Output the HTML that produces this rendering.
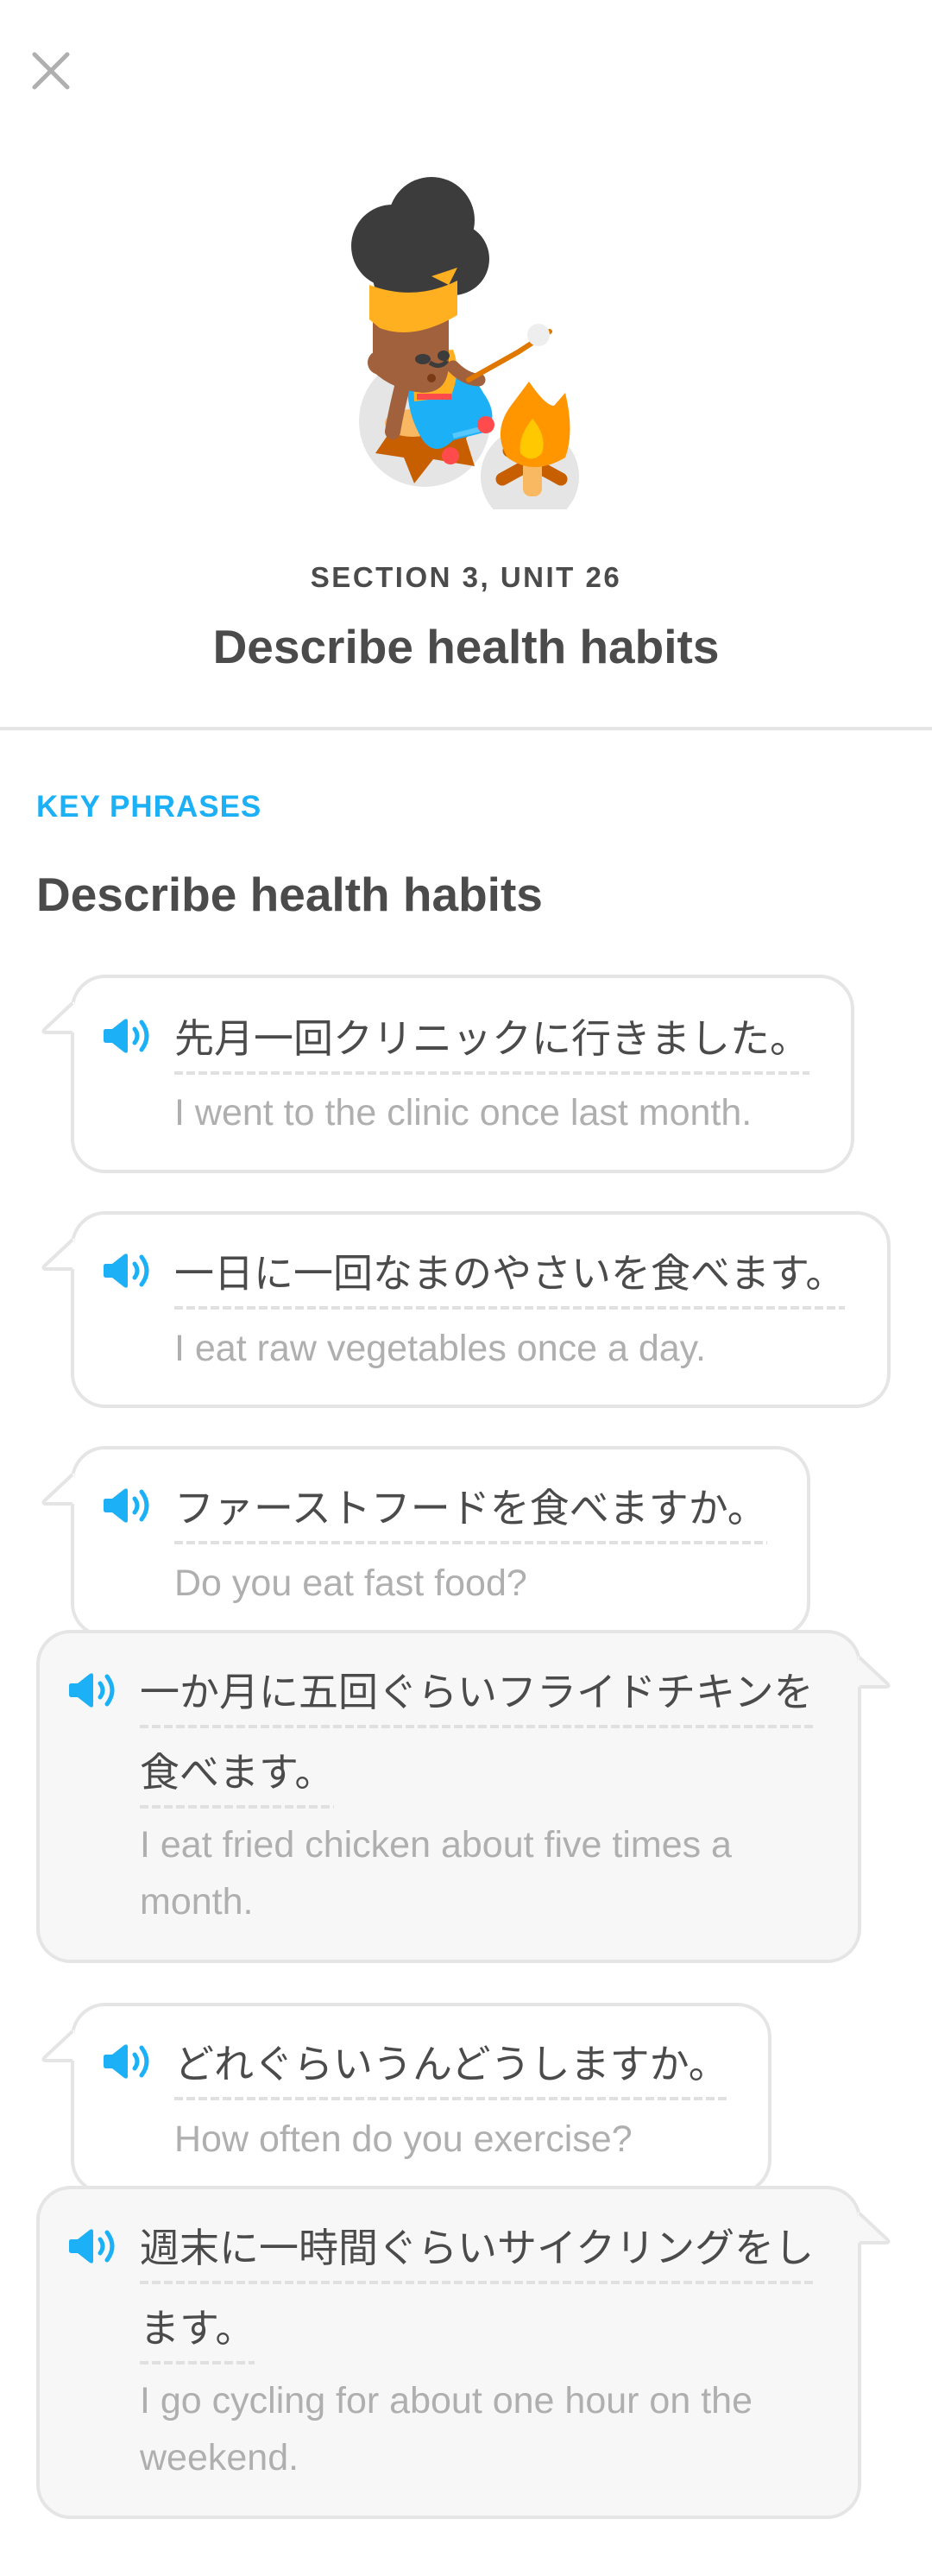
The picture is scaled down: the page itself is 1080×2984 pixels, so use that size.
<!DOCTYPE html>
<html><head><meta charset="utf-8">
<style>
*{margin:0;padding:0;box-sizing:border-box}
body{width:1080px;height:2984px;background:#fff;position:relative;overflow:hidden;font-family:"Liberation Sans","Noto Sans CJK JP",sans-serif;color:#4b4b4b}
.a{position:absolute}
.bub{position:absolute;border:4px solid #e5e5e5;border-radius:40px;background:#fff}
.bub.g{background:#f7f7f7}
.jp{position:absolute;font-size:46px;line-height:54px;white-space:nowrap;padding-bottom:15px;color:#4b4b4b;
 background:repeating-linear-gradient(90deg,#e0e0e0 0 10px,transparent 10px 14px) left bottom/100% 4px no-repeat}
.en{position:absolute;font-size:43px;line-height:50px;color:#afafaf;white-space:nowrap}
.spk{position:absolute;width:64px;height:44px}
.tail{position:absolute;width:44px;height:48px}
</style></head><body>

<svg class="a" style="left:36px;top:59px" width="46" height="46" viewBox="0 0 46 46"><path d="M4 4L42 42M42 4L4 42" stroke="#afafaf" stroke-width="5" stroke-linecap="round"/></svg>

<svg class="a" style="left:380px;top:190px" width="320" height="400" viewBox="380 190 320 400">
 <circle cx="492" cy="488" r="76" fill="#e5e5e5"/>
 <circle cx="614" cy="552" r="57" fill="#e5e5e5"/>
 <!-- stump -->
 <path d="M452 500 L435 525 L468 530 L480 560 L502 532 L550 540 L540 508 L552 488 L470 488 Z" fill="#c75f00"/>
 <ellipse cx="478" cy="490" rx="32" ry="16" fill="#f9b862"/>
 <!-- pants -->
 <path d="M475 420 Q465 470 490 510 Q505 530 525 510 L565 500 Q578 480 560 455 Q540 420 505 418 Z" fill="#1cb0f6"/>
 <path d="M525 505 L565 495" stroke="#56c8ff" stroke-width="6"/>
 <circle cx="563" cy="492" r="10" fill="#ff4b4b"/>
 <circle cx="522" cy="528" r="10" fill="#ff4b4b"/>
 <!-- torso -->
 <path d="M478 450 L525 445 Q535 470 522 500 L480 505 Z" fill="#ffb020" transform="translate(0,-40)"/>
 <rect x="483" y="456" width="40" height="7" fill="#ff4b4b"/>
 <path d="M472 425 Q460 470 455 500" stroke="#a0613c" stroke-width="18" stroke-linecap="round" fill="none"/>
 <path d="M525 425 Q540 440 555 440" stroke="#a0613c" stroke-width="15" stroke-linecap="round" fill="none"/>
 <!-- stick & marshmallow -->
 <path d="M543 440 L600 408 L637 384" stroke="#e07800" stroke-width="6" fill="none" stroke-linecap="round"/>
 <circle cx="624" cy="388" r="13" fill="#eee"/>
 <!-- head -->
 <path d="M432 350 L520 350 L520 420 Q520 455 490 455 Q455 452 432 430 Z" fill="#a0613c"/>
 <circle cx="440" cy="420" r="14" fill="#a0613c"/>
 <path d="M498 420 Q510 428 518 418" stroke="#3c3c3c" stroke-width="5" fill="none"/>
 <ellipse cx="490" cy="416" rx="9" ry="6" fill="#3c3c3c"/><ellipse cx="514" cy="412" rx="7" ry="6" fill="#3c3c3c"/>
 <circle cx="500" cy="438" r="5" fill="#7a3a18"/>
 <!-- hair -->
 <circle cx="455" cy="285" r="48" fill="#3c3c3c"/>
 <circle cx="500" cy="255" r="50" fill="#3c3c3c"/>
 <circle cx="525" cy="300" r="42" fill="#3c3c3c"/>
 <circle cx="470" cy="320" r="38" fill="#3c3c3c"/>
 <!-- headband -->
 <path d="M428 330 Q480 350 530 325 L530 365 Q480 395 440 380 L428 370 Z" fill="#ffb020"/>
 <path d="M500 320 L520 330 L530 310 Z" fill="#ffb020"/>
 <!-- fire logs -->
 <path d="M582 555 L642 522 M650 555 L590 522" stroke="#c75f00" stroke-width="15" stroke-linecap="round"/>
 <rect x="606" y="525" width="22" height="50" rx="9" fill="#f9b862"/>
 <!-- flame -->
 <path d="M613 442 Q632 470 642 470 L655 455 Q666 500 655 530 Q618 552 588 530 Q570 500 592 470 Z" fill="#ff9600"/>
 <path d="M617 485 Q634 505 628 525 Q615 538 603 525 Q600 506 617 485 Z" fill="#ffc800"/>
</svg>

<div class="a" style="left:0;width:1080px;top:648px;text-align:center;font-size:33px;font-weight:bold;letter-spacing:2.5px;line-height:42px;color:#4b4b4b">SECTION 3, UNIT 26</div>
<div class="a" style="left:0;width:1080px;top:716px;text-align:center;font-size:55px;font-weight:bold;line-height:66px;color:#4b4b4b">Describe health habits</div>
<div class="a" style="left:0;top:842px;width:1080px;height:4px;background:#e5e5e5"></div>

<div class="a" style="left:42px;top:914px;font-size:35px;font-weight:bold;color:#1cb0f6;line-height:42px;letter-spacing:1px">KEY PHRASES</div>
<div class="a" style="left:42px;top:1004px;font-size:55px;font-weight:bold;color:#4b4b4b;line-height:64px">Describe health habits</div>

<!-- Bubble 1 -->
<div class="bub" style="left:82px;top:1129px;width:908px;height:230px"></div>
<svg class="tail" style="left:44px;top:1158px" viewBox="0 0 44 48"><path d="M42 2 L6 36 L42 38 Z" fill="#fff"/><path d="M40 4 L8 34 Q4 38 10 38 L40 38" stroke="#e5e5e5" stroke-width="4" fill="none" stroke-linejoin="round"/></svg>
<svg class="spk" style="left:118px;top:1178px" viewBox="0 0 64 44"><path d="M4 14 Q2 14 2 17 L2 27 Q2 30 5 30 L12 30 L26 41 Q30 43 30 39 L30 5 Q30 1 26 3 L12 14 Z" fill="#1cb0f6"/><path d="M38 14 Q44 22 38 30 M46 6 Q58 22 46 38" stroke="#1cb0f6" stroke-width="5" fill="none" stroke-linecap="round"/></svg>
<div class="jp" style="left:202px;top:1176px">先月一回クリニックに行きました。</div>
<div class="en" style="left:202px;top:1264px">I went to the clinic once last month.</div>

<!-- Bubble 2 -->
<div class="bub" style="left:82px;top:1403px;width:950px;height:228px"></div>
<svg class="tail" style="left:44px;top:1432px" viewBox="0 0 44 48"><path d="M42 2 L6 36 L42 38 Z" fill="#fff"/><path d="M40 4 L8 34 Q4 38 10 38 L40 38" stroke="#e5e5e5" stroke-width="4" fill="none" stroke-linejoin="round"/></svg>
<svg class="spk" style="left:118px;top:1450px" viewBox="0 0 64 44"><path d="M4 14 Q2 14 2 17 L2 27 Q2 30 5 30 L12 30 L26 41 Q30 43 30 39 L30 5 Q30 1 26 3 L12 14 Z" fill="#1cb0f6"/><path d="M38 14 Q44 22 38 30 M46 6 Q58 22 46 38" stroke="#1cb0f6" stroke-width="5" fill="none" stroke-linecap="round"/></svg>
<div class="jp" style="left:202px;top:1448px">一日に一回なまのやさいを食べます。</div>
<div class="en" style="left:202px;top:1537px">I eat raw vegetables once a day.</div>

<!-- Bubble 3 -->
<div class="bub" style="left:82px;top:1675px;width:857px;height:222px"></div>
<svg class="tail" style="left:44px;top:1704px" viewBox="0 0 44 48"><path d="M42 2 L6 36 L42 38 Z" fill="#fff"/><path d="M40 4 L8 34 Q4 38 10 38 L40 38" stroke="#e5e5e5" stroke-width="4" fill="none" stroke-linejoin="round"/></svg>
<svg class="spk" style="left:118px;top:1722px" viewBox="0 0 64 44"><path d="M4 14 Q2 14 2 17 L2 27 Q2 30 5 30 L12 30 L26 41 Q30 43 30 39 L30 5 Q30 1 26 3 L12 14 Z" fill="#1cb0f6"/><path d="M38 14 Q44 22 38 30 M46 6 Q58 22 46 38" stroke="#1cb0f6" stroke-width="5" fill="none" stroke-linecap="round"/></svg>
<div class="jp" style="left:202px;top:1720px">ファーストフードを食べますか。</div>
<div class="en" style="left:202px;top:1809px">Do you eat fast food?</div>

<!-- Bubble 4 -->
<div class="bub g" style="left:42px;top:1888px;width:956px;height:386px"></div>
<svg class="tail" style="left:992px;top:1916px" viewBox="0 0 44 48"><path d="M2 2 L38 36 L2 38 Z" fill="#f7f7f7"/><path d="M4 4 L36 34 Q40 38 34 38 L4 38" stroke="#e5e5e5" stroke-width="4" fill="none" stroke-linejoin="round"/></svg>
<svg class="spk" style="left:78px;top:1936px" viewBox="0 0 64 44"><path d="M4 14 Q2 14 2 17 L2 27 Q2 30 5 30 L12 30 L26 41 Q30 43 30 39 L30 5 Q30 1 26 3 L12 14 Z" fill="#1cb0f6"/><path d="M38 14 Q44 22 38 30 M46 6 Q58 22 46 38" stroke="#1cb0f6" stroke-width="5" fill="none" stroke-linecap="round"/></svg>
<div class="jp" style="left:162px;top:1933px">一か月に五回ぐらいフライドチキンを</div>
<div class="jp" style="left:162px;top:2026px">食べます。</div>
<div class="en" style="left:162px;top:2112px">I eat fried chicken about five times a</div>
<div class="en" style="left:162px;top:2178px">month.</div>

<!-- Bubble 5 -->
<div class="bub" style="left:82px;top:2320px;width:812px;height:222px"></div>
<svg class="tail" style="left:44px;top:2349px" viewBox="0 0 44 48"><path d="M42 2 L6 36 L42 38 Z" fill="#fff"/><path d="M40 4 L8 34 Q4 38 10 38 L40 38" stroke="#e5e5e5" stroke-width="4" fill="none" stroke-linejoin="round"/></svg>
<svg class="spk" style="left:118px;top:2366px" viewBox="0 0 64 44"><path d="M4 14 Q2 14 2 17 L2 27 Q2 30 5 30 L12 30 L26 41 Q30 43 30 39 L30 5 Q30 1 26 3 L12 14 Z" fill="#1cb0f6"/><path d="M38 14 Q44 22 38 30 M46 6 Q58 22 46 38" stroke="#1cb0f6" stroke-width="5" fill="none" stroke-linecap="round"/></svg>
<div class="jp" style="left:202px;top:2364px">どれぐらいうんどうしますか。</div>
<div class="en" style="left:202px;top:2453px">How often do you exercise?</div>

<!-- Bubble 6 -->
<div class="bub g" style="left:42px;top:2532px;width:956px;height:386px"></div>
<svg class="tail" style="left:992px;top:2560px" viewBox="0 0 44 48"><path d="M2 2 L38 36 L2 38 Z" fill="#f7f7f7"/><path d="M4 4 L36 34 Q40 38 34 38 L4 38" stroke="#e5e5e5" stroke-width="4" fill="none" stroke-linejoin="round"/></svg>
<svg class="spk" style="left:78px;top:2580px" viewBox="0 0 64 44"><path d="M4 14 Q2 14 2 17 L2 27 Q2 30 5 30 L12 30 L26 41 Q30 43 30 39 L30 5 Q30 1 26 3 L12 14 Z" fill="#1cb0f6"/><path d="M38 14 Q44 22 38 30 M46 6 Q58 22 46 38" stroke="#1cb0f6" stroke-width="5" fill="none" stroke-linecap="round"/></svg>
<div class="jp" style="left:162px;top:2577px">週末に一時間ぐらいサイクリングをし</div>
<div class="jp" style="left:162px;top:2670px">ます。</div>
<div class="en" style="left:162px;top:2756px">I go cycling for about one hour on the</div>
<div class="en" style="left:162px;top:2822px">weekend.</div>

</body></html>
